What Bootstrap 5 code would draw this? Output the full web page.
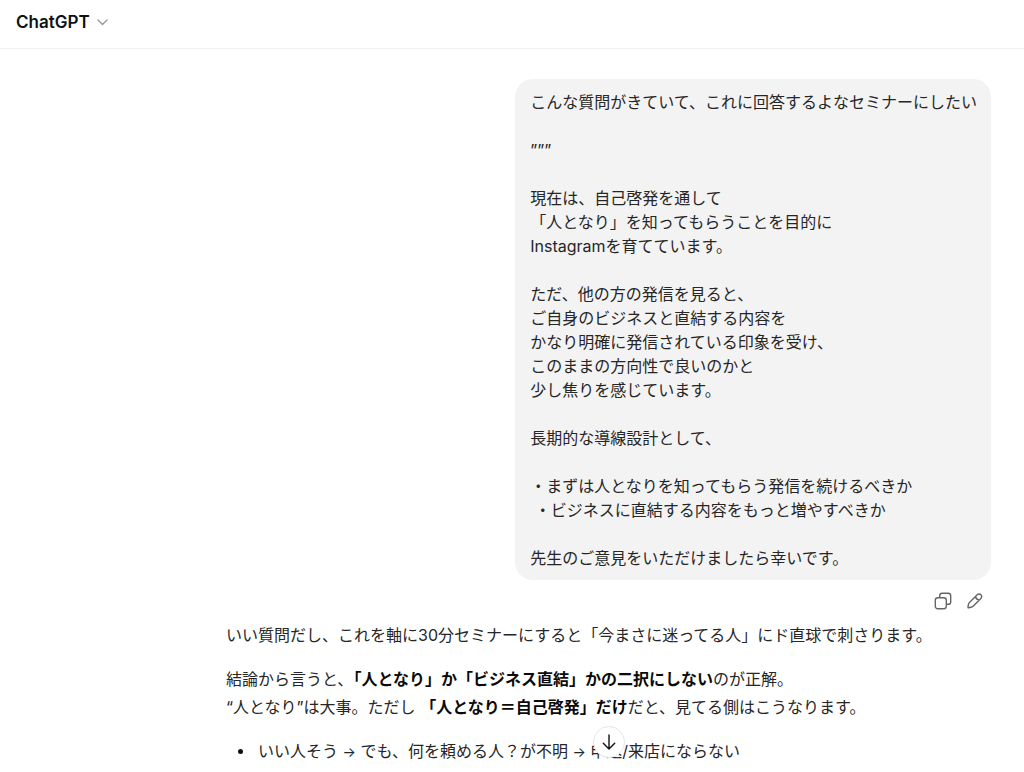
<!DOCTYPE html>
<html lang="ja">
<head>
<meta charset="utf-8">
<meta name="viewport" content="width=device-width, initial-scale=1">
<title>ChatGPT</title>
<link href="https://cdn.jsdelivr.net/npm/bootstrap@5.3.0/dist/css/bootstrap.min.css" rel="stylesheet">
<style>
  body { font-family: Inter, "Noto Sans CJK JP", sans-serif; font-size: 16px; line-height: 28px; color: #262626; background: #fff; }
  .topbar { height: 49px; padding: 0 16px 4px; border-bottom: 1px solid #f1f1f1; }
  .model-btn { font-size: 17px; font-weight: 600; line-height: 24px; color: #111; }
  .thread-wrap { padding: 30px 33px 0 16px; }
  .thread { width: 100%; max-width: 765px; }
  .bubble { background: #f3f3f3; border-radius: 18px; padding: 11px 14px 10px 15px; line-height: 24px; white-space: pre-wrap; max-width: 100%; }
  .tool-row { padding: 5px 0 4px; }
  .tool-btn { width: 32px; height: 32px; color: #666; }
  .answer p { margin-bottom: 16px; }
  .answer strong { font-weight: 700; color: #0a0a0a; }
  .half { font-feature-settings: "halt"; }
  .arrow { font-size: 14px; }
  .answer li { display: flex; align-items: center; }
  .answer li::before { content: ""; width: 5px; height: 5px; margin: 0 15px 0 12px; border-radius: 50%; background: #111; flex: none; }
  .scroll-dock { bottom: 14px; padding: 0 33px 0 16px; pointer-events: none; }
  .scroll-btn { width: 32px; height: 32px; background: #fff; border: 1px solid #e6e6e6; color: #111; pointer-events: auto; }
</style>
</head>
<body>
<div class="vh-100 d-flex flex-column overflow-hidden position-relative">
  <header class="topbar d-flex align-items-center flex-shrink-0">
    <button type="button" class="model-btn btn p-0 border-0 d-flex align-items-center gap-1">ChatGPT
      <svg width="16" height="16" viewBox="0 0 16 16" fill="none" stroke="#999" stroke-width="1.4" stroke-linecap="round" stroke-linejoin="round" aria-hidden="true"><path d="M4 6l4.500 4.500L13 6"/></svg>
    </button>
  </header>
  <main class="thread-wrap flex-grow-1 overflow-hidden">
    <div class="thread ms-auto">
      <section class="d-flex flex-column align-items-end">
        <div class="bubble">こんな質問がきていて、これに回答するよなセミナーにしたい

”””

現在は、自己啓発を通して
「人となり」を知ってもらうことを目的に
Instagramを育てています。

ただ、他の方の発信を見ると、
ご自身のビジネスと直結する内容を
かなり明確に発信されている印象を受け、
このままの方向性で良いのかと
少し焦りを感じています。

長期的な導線設計として、

・まずは人となりを知ってもらう発信を続けるべきか
 ・ビジネスに直結する内容をもっと増やすべきか

先生のご意見をいただけましたら幸いです。</div>
        <div class="tool-row d-flex">
          <button type="button" class="tool-btn btn p-0 border-0 d-flex align-items-center justify-content-center" aria-label="コピー">
            <svg width="18" height="18" viewBox="0 0 18 18" fill="none" stroke="currentColor" stroke-width="1.4" stroke-linejoin="round" aria-hidden="true"><rect x="1.300" y="5.700" width="11" height="11" rx="2.400"/><path d="M5.700 5.700V3.700a2.400 2.400 0 0 1 2.400-2.400h6.200a2.400 2.400 0 0 1 2.400 2.400v6.200a2.400 2.400 0 0 1-2.400 2.400h-2"/></svg>
          </button>
          <button type="button" class="tool-btn btn p-0 border-0 d-flex align-items-center justify-content-center" aria-label="編集">
            <svg width="18" height="18" viewBox="0 0 18 18" fill="none" stroke="currentColor" stroke-width="1.4" stroke-linejoin="round" aria-hidden="true"><path d="M11.200 2.700a2.600 2.600 0 0 1 3.700 0 2.600 2.600 0 0 1 0 3.700l-7.800 7.800a4 4 0 0 1-2.100 1.100l-2.500.5a.5.5 0 0 1-.6-.6l.5-2.500a4 4 0 0 1 1.100-2.100zM9.500 4.400q.4 3.300 3.700 3.700"/></svg>
          </button>
        </div>
      </section>
      <article class="answer">
        <p>いい質問だし、これを軸に30分セミナーにすると「今まさに迷ってる人」にド直球で刺さります。</p>
        <p>結論から言うと、<strong><span class="half">「</span>人となり」か「ビジネス直結」かの二択にしない</strong>のが正解。<br>“人となり”は大事。ただし <strong>「人となり＝自己啓発」だけ</strong>だと、見てる側はこうなります。</p>
        <ul class="list-unstyled mb-0"><li><span>いい人そう <span class="arrow">→</span> でも、何を頼める人？が不明 <span class="arrow">→</span> 申込/来店にならない</span></li></ul>
      </article>
    </div>
  </main>
  <div class="scroll-dock position-absolute start-0 end-0">
    <div class="thread ms-auto d-flex justify-content-center">
      <button type="button" class="scroll-btn btn rounded-circle p-0 d-flex align-items-center justify-content-center" aria-label="一番下へ">
        <svg width="18" height="18" viewBox="0 0 18 18" fill="none" stroke="currentColor" stroke-width="1.400" stroke-linecap="round" stroke-linejoin="round" aria-hidden="true"><path d="M9 2v14M3.300 10.300 9 16l5.700-5.700"/></svg>
      </button>
    </div>
  </div>
</div>
<script src="https://cdn.jsdelivr.net/npm/bootstrap@5.3.0/dist/js/bootstrap.bundle.min.js"></script>
</body>
</html>
